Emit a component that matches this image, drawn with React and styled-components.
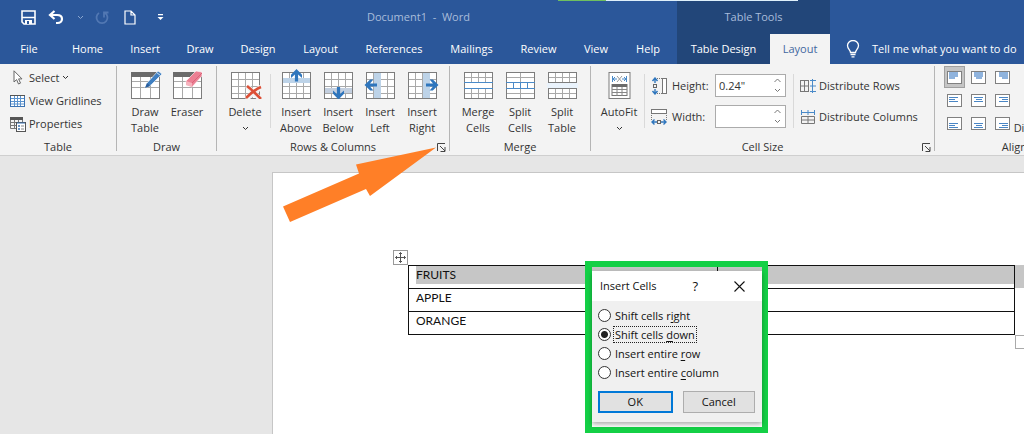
import { useState } from "react";
import styled, { createGlobalStyle, css } from "styled-components";

const TABS = [
  "File",
  "Home",
  "Insert",
  "Draw",
  "Design",
  "Layout",
  "References",
  "Mailings",
  "Review",
  "View",
  "Help",
];

const FRUITS = ["FRUITS", "APPLE", "ORANGE"];

const SHIFT_OPTIONS = [
  { id: "right", before: "Shift cells r", key: "i", after: "ght" },
  { id: "down", before: "Shift cells ", key: "d", after: "own" },
  { id: "row", before: "Insert entire ", key: "r", after: "ow" },
  { id: "column", before: "Insert entire ", key: "c", after: "olumn" },
];

const ALIGNMENTS = ["top", "middle", "bottom"].flatMap((v) =>
  ["left", "center", "right"].map((h) => ({ v, h }))
);

/* ---------- icons ---------- */

const Grid = ({ rows = [7, 14, 21], cols = [7.5, 14.5, 21.5], head }) => (
  <>
    <rect x="0.5" y="0.5" width="28" height="26" fill="#fff" stroke="#7d7d7d" />
    {rows.map((y) => (
      <path key={y} d={`M1 ${y + 0.5}H28`} stroke="#a9a9a9" />
    ))}
    {cols.map((x) => (
      <path key={x} d={`M${x} 1V26`} stroke="#a9a9a9" />
    ))}
    {head && <rect width="29" height="5" fill="#6b6b6b" />}
  </>
);

const BigIcon = ({ children }) => (
  <svg width="33" height="30" viewBox="-2 -3 33 30" fill="none" aria-hidden="true">
    {children}
  </svg>
);

const DrawTableIcon = () => (
  <BigIcon>
    <Grid head rows={[9, 15]} cols={[9.5, 19.5]} />
    <path d="M14 16l2-5L27-1l4 3-11 11z" fill="#3f7fc1" stroke="#fff" strokeWidth="0.6" />
    <path d="M14 16l2-5 3.5 3z" fill="#2a5f9e" />
    <path d="M25.500 0.500l4 3" stroke="#d6e5f4" />
  </BigIcon>
);

const EraserIcon = () => (
  <BigIcon>
    <Grid head rows={[9, 15]} cols={[9.5, 19.5]} />
    <path d="M13 9L23-1l6 1v4L19 15l-6-2z" fill="#ec7f93" stroke="#fff" strokeWidth="0.6" />
    <path d="M13 9l6 2v4l-6-2z" fill="#f6b3be" />
    <path d="M19 11L29 1" stroke="#d9657b" />
  </BigIcon>
);

const DeleteIcon = () => (
  <BigIcon>
    <Grid />
    <path d="M16 14L30 28M30 15L15 27" stroke="#f3f3f3" strokeWidth="5" />
    <path d="M16 14c4 3 9 8 14 13M30 15c-5 2-11 7-15 11" stroke="#dc4f36" strokeWidth="2.600" />
  </BigIcon>
);

const Arrow = ({ x, y, turn }) => (
  <g transform={`translate(${x} ${y}) rotate(${turn})`}>
    <path d="M0-6.500L5.500-.8V2.400L1.600-1V6h-3.200V-1L-5.500 2.400V-.8z" fill="#2f76bd" />
  </g>
);

const InsertAboveIcon = () => (
  <BigIcon>
    <Grid />
    <rect x="1" y="6" width="27" height="5" fill="#bdd3e8" />
    <Arrow x={14.500} y={3.500} turn={0} />
  </BigIcon>
);

const InsertBelowIcon = () => (
  <BigIcon>
    <Grid />
    <rect x="1" y="16" width="27" height="5" fill="#c3cfdf" />
    <Arrow x={14.500} y={21} turn={180} />
  </BigIcon>
);

const InsertLeftIcon = () => (
  <BigIcon>
    <Grid />
    <rect x="8" y="1" width="7" height="25" fill="#bdd3e8" />
    <Arrow x={5} y={13} turn={-90} />
  </BigIcon>
);

const InsertRightIcon = () => (
  <BigIcon>
    <Grid />
    <rect x="15" y="1" width="7" height="25" fill="#bdd3e8" />
    <Arrow x={24} y={13} turn={90} />
  </BigIcon>
);

const MergeIcon = () => (
  <BigIcon>
    <Grid rows={[5, 21]} />
    <rect x="1" y="11" width="27" height="5" fill="#fff" />
    <path d="M0 10.500H29M0 16.500H29" stroke="#4a8ac8" />
  </BigIcon>
);

const SplitCellsIcon = () => (
  <BigIcon>
    <Grid rows={[5, 21]} cols={[14.5]} />
    <path d="M0 10.500H29M0 16.500H29M7.500 11V16M14.500 11V16M21.500 11V16" stroke="#4a8ac8" />
  </BigIcon>
);

const SplitTableIcon = () => (
  <BigIcon>
    <Grid rows={[5, 21]} />
    <rect x="-1" y="11" width="31" height="5" fill="#eaf3fc" />
    <path d="M0 10.500H29M0 16.500H29" stroke="#7d7d7d" />
  </BigIcon>
);

const AutoFitIcon = () => (
  <BigIcon>
    <rect x="4" y="0.500" width="21" height="26" fill="#fff" stroke="#7d7d7d" />
    <path d="M7.500 4v6M21.500 4v6M8 7h4M17 7h4M10 5L8 7l2 2M19 5l2 2-2 2" stroke="#4a8ac8" />
    <path d="M12 4l5 6M17 4l-5 6" stroke="#999" />
    <rect x="7" y="12.500" width="15" height="11" fill="#fff" stroke="#777" />
    <rect x="7" y="12" width="15" height="3" fill="#6b6b6b" />
    <path d="M7 17.500H22M7 20.500H22M12 15V24M17 15V24" stroke="#888" />
  </BigIcon>
);

const TextDirectionIcon = () => (
  <BigIcon>
    <path d="M2 12h4M2 15h5M2 22h5M2 25h4" stroke="#8a8a8a" />
    <path d="M14 6v18M11 20l3 4 3-4" stroke="#4a8ac8" />
  </BigIcon>
);

const SelectIcon = () => (
  <svg width="17" height="16" viewBox="0 0 17 16" aria-hidden="true">
    <path d="M5 .8V12l2.600-2.400L9.500 14l2-.9-1.900-4.200H13z" fill="#fff" stroke="#666" />
  </svg>
);

const GridlinesIcon = () => (
  <svg width="17" height="16" viewBox="0 0 17 16" fill="none" aria-hidden="true">
    <rect x="1.500" y="2.500" width="14" height="11" fill="#fff" stroke="#3b73b3" />
    <path d="M2 5.500H15M2 8.500H15M2 11H15M5.500 3V13M8.500 3V13M11.500 3V13" stroke="#5b93cf" />
    <path d="M1 2.500H16" stroke="#555" />
  </svg>
);

const PropertiesIcon = () => (
  <svg width="17" height="16" viewBox="0 0 17 16" fill="none" aria-hidden="true">
    <path d="M1.500 1V12.500H8M1.500 6.500H8M1.500 9.500H8M5.500 3V12M9.500 3V6M13.500 3V6" stroke="#777" />
    <path d="M1 1H14V4H1z" fill="#555" />
    <rect x="7.500" y="6.500" width="9" height="9" fill="#fff" stroke="#555" />
    <path d="M8 7H16" stroke="#3b73b3" />
    <path d="M9 10h2M9 13h2" stroke="#3b73b3" strokeWidth="1.500" />
    <path d="M12 10h3M12 13h3" stroke="#888" />
  </svg>
);

const HeightIcon = () => (
  <svg width="17" height="18" viewBox="0 0 17 18" fill="none" aria-hidden="true">
    <path d="M4 2v4M4 12v4M1.500 4L4 1l2.500 3M1.500 14L4 17l2.500-3" stroke="#2f76bd" strokeWidth="1.400" />
    <rect x="2.500" y="7.500" width="3" height="3" stroke="#666" />
    <path d="M6 1.500h5M6 16.500h5" stroke="#777" strokeDasharray="1 1" />
    <rect x="11.500" y="1.500" width="4" height="15" fill="#fff" stroke="#777" />
  </svg>
);

const WidthIcon = () => (
  <svg width="17" height="18" viewBox="0 0 17 18" fill="none" aria-hidden="true">
    <rect x="0.500" y="1.500" width="15" height="4" fill="#fff" stroke="#777" />
    <path d="M.5 7v5M15.500 7v5" stroke="#777" strokeDasharray="1 1" />
    <path d="M1 14h5M10 14h5M3.500 11.500L1 14l2.500 2.500M12.500 11.500L15 14l-2.500 2.500" stroke="#2f76bd" strokeWidth="1.400" />
    <rect x="6.500" y="12.500" width="3" height="3" stroke="#666" />
  </svg>
);

const DistributeRowsIcon = () => (
  <svg width="16" height="16" viewBox="0 0 16 16" fill="none" aria-hidden="true">
    <path d="M.5 2V14M4.500 2V14M8.500 2V14M0 2.500H9M0 8H9M0 13.500H9" stroke="#777" />
    <path d="M12.500 1V15M10 2.500h6M10 8h6M10 13.500h6" stroke="#4a8ac8" />
  </svg>
);

const DistributeColumnsIcon = () => (
  <svg width="16" height="16" viewBox="0 0 16 16" fill="none" aria-hidden="true">
    <path d="M1 3.500H15M1.500 1v5M8 1v5M14.500 1v5" stroke="#4a8ac8" />
    <path d="M1.500 7.500h13v7h-13zM1 11H15M8 8V14" stroke="#777" />
  </svg>
);

const AlignIcon = ({ v, h }) => {
  const long = { left: 2, center: 3, right: 4 }[h];
  const short = { left: 2, center: 5, right: 7 }[h];
  const start = { middle: 3.5, bottom: 6.5 }[v];
  return (
    <svg width="15" height="13" viewBox="0 0 15 13" fill="none" aria-hidden="true">
      <rect x="0.500" y="0.500" width="14" height="12" fill="#fff" stroke="#808080" />
      {v === "top" ? (
        <path d={`M${long} 1h9v5H${short + 6}v2H${short}V6H${long}z`} fill="#8fb3dd" />
      ) : (
        <path
          d={`M${long} ${start}h9M${short} ${start + 2}h6M${long} ${start + 4}h9`}
          stroke="#4a86c5"
        />
      )}
    </svg>
  );
};

const Chevron = ({ up }) => (
  <svg width="7" height="5" viewBox="0 0 7 5" fill="none" aria-hidden="true">
    <path d={up ? "M.5 4l3-3 3 3" : "M1 1l2.500 2.500L6 1"} stroke="currentColor" />
  </svg>
);

const LauncherIcon = () => (
  <svg width="9" height="9" viewBox="0 0 9 9" fill="none" aria-hidden="true">
    <path d="M.5 8V.5H8M3 3l5 5M8 4v4.500H3.500" stroke="#444" />
  </svg>
);

/* ---------- parts ---------- */

const LargeButton = ({ icon, lines, menu }) => (
  <Large>
    {icon}
    {lines.map((line) => (
      <span key={line}>{line}</span>
    ))}
    {menu && (
      <Caret>
        <Chevron />
      </Caret>
    )}
  </Large>
);

const Group = ({ title, launcher, children, width }) => (
  <RibbonGroup $width={width}>
    <GroupBody>{children}</GroupBody>
    <GroupFooter>
      <span>{title}</span>
      {launcher && (
        <Launcher aria-label={`${title} settings`}>
          <LauncherIcon />
        </Launcher>
      )}
    </GroupFooter>
  </RibbonGroup>
);

const SizeField = ({ id, label, icon, value }) => (
  <SizeRow>
    {icon}
    <label htmlFor={id}>{label}</label>
    <Spinner>
      <input id={id} type="text" defaultValue={value} />
      <div>
        <button aria-label={`Increase ${id}`}>
          <Chevron up />
        </button>
        <button aria-label={`Decrease ${id}`}>
          <Chevron />
        </button>
      </div>
    </Spinner>
  </SizeRow>
);

const QuickAccess = () => (
  <QuickBar>
    <QuickButton aria-label="Save">
      <svg width="15" height="15" viewBox="0 0 15 15" fill="none">
        <path d="M1 1h13v13H3l-2-2z" stroke="#fff" strokeWidth="1.600" />
        <path d="M1 7.500h13" stroke="#fff" strokeWidth="1.500" />
        <path d="M4 10h7v4H4z" fill="#fff" />
        <path d="M6 11h2v3H6z" fill="#2b579a" />
      </svg>
    </QuickButton>
    <QuickButton aria-label="Undo">
      <svg width="16" height="15" viewBox="0 0 16 15" fill="none">
        <path d="M2 5h7c3 0 5 1.600 5 4s-2 4-4.500 4H8" stroke="#fff" strokeWidth="2.200" />
        <path d="M6.500 1L2 5l4.500 4" stroke="#fff" strokeWidth="2.200" />
      </svg>
    </QuickButton>
    <QuickButton aria-label="Undo list" $faded>
      <Chevron />
    </QuickButton>
    <QuickButton aria-label="Repeat">
      <svg width="14" height="15" viewBox="0 0 14 15" fill="none">
        <path d="M4 3a5.500 5.500 0 1 0 6 0M9 7.500V2.500h4.500" stroke="#5278b3" strokeWidth="1.800" />
      </svg>
    </QuickButton>
    <QuickButton aria-label="New document">
      <svg width="12" height="15" viewBox="0 0 12 15" fill="none">
        <path d="M1 1h6l4 4v9H1zM7 1v4h4" stroke="#fff" strokeWidth="1.200" />
      </svg>
    </QuickButton>
    <QuickButton aria-label="Customize toolbar">
      <svg width="7" height="7" viewBox="0 0 7 7">
        <path d="M1 0h5v1.300H1zM.5 3h6l-3 3z" fill="#fff" />
      </svg>
    </QuickButton>
  </QuickBar>
);

const InsertCells = () => {
  const [choice, setChoice] = useState("down");

  return (
    <Highlight>
      <Dialog role="dialog" aria-label="Insert Cells">
        <DialogTitle>
          <span>Insert Cells</span>
          <button aria-label="Help">?</button>
          <button aria-label="Close">
            <svg width="11" height="11" viewBox="0 0 11 11">
              <path d="M.5.5l10 10M10.500.5l-10 10" stroke="#111" strokeWidth="1.100" />
            </svg>
          </button>
        </DialogTitle>
        <Options>
          {SHIFT_OPTIONS.map((option) => (
            <Option key={option.id} $focused={choice === option.id}>
              <input
                type="radio"
                name="shift"
                checked={choice === option.id}
                onChange={() => setChoice(option.id)}
              />
              <span>
                {option.before}
                <u>{option.key}</u>
                {option.after}
              </span>
            </Option>
          ))}
        </Options>
        <DialogButtons>
          <DialogButton $primary>OK</DialogButton>
          <DialogButton>Cancel</DialogButton>
        </DialogButtons>
      </Dialog>
    </Highlight>
  );
};

const App = () => {
  return (
    <>
      <GlobalStyle />
      <Window>
        <Header>
          <Progress />
          <MainHead>
            <TitleRow>
              <QuickAccess />
              <DocTitle>Document1&nbsp; -&nbsp; Word</DocTitle>
            </TitleRow>
            <TabRow>
              {TABS.map((tab) => (
                <Tab key={tab}>{tab}</Tab>
              ))}
            </TabRow>
          </MainHead>
          <ContextHead>
            <ContextTitle>Table Tools</ContextTitle>
            <ContextTabs>
              <Tab>Table Design</Tab>
              <Tab $active>Layout</Tab>
            </ContextTabs>
          </ContextHead>
          <TellMe>
            <svg width="14" height="18" viewBox="0 0 14 18" fill="none" aria-hidden="true">
              <path
                d="M4.500 12.500c0-2.500-3-3.500-3-7a5.500 5 0 0 1 11 0c0 3.500-3 4.500-3 7zM4.500 14.500h5M5.500 16.800h3"
                stroke="#fff"
                strokeWidth="1.300"
              />
            </svg>
            Tell me what you want to do
          </TellMe>
        </Header>

        <Ribbon>
          <Group title="Table" width={117}>
            <Stack>
              <SmallButton>
                <SelectIcon /> Select <Chevron />
              </SmallButton>
              <SmallButton>
                <GridlinesIcon /> View Gridlines
              </SmallButton>
              <SmallButton>
                <PropertiesIcon /> Properties
              </SmallButton>
            </Stack>
          </Group>
          <Group title="Draw" width={100}>
            <LargeButton icon={<DrawTableIcon />} lines={["Draw", "Table"]} />
            <LargeButton icon={<EraserIcon />} lines={["Eraser"]} />
          </Group>
          <Group title="Rows & Columns" width={233} launcher>
            <LargeButton icon={<DeleteIcon />} lines={["Delete"]} menu />
            <Separator />
            <LargeButton icon={<InsertAboveIcon />} lines={["Insert", "Above"]} />
            <LargeButton icon={<InsertBelowIcon />} lines={["Insert", "Below"]} />
            <LargeButton icon={<InsertLeftIcon />} lines={["Insert", "Left"]} />
            <LargeButton icon={<InsertRightIcon />} lines={["Insert", "Right"]} />
          </Group>
          <Group title="Merge" width={141}>
            <LargeButton icon={<MergeIcon />} lines={["Merge", "Cells"]} />
            <LargeButton icon={<SplitCellsIcon />} lines={["Split", "Cells"]} />
            <LargeButton icon={<SplitTableIcon />} lines={["Split", "Table"]} />
          </Group>
          <Group title="Cell Size" width={344} launcher>
            <LargeButton icon={<AutoFitIcon />} lines={["AutoFit"]} menu />
            <Separator />
            <SizeStack>
              <SizeField id="height" label="Height:" icon={<HeightIcon />} value={'0.24"'} />
              <SizeField id="width" label="Width:" icon={<WidthIcon />} value="" />
            </SizeStack>
            <Separator />
            <SizeStack>
              <SmallButton $tall>
                <DistributeRowsIcon /> Distribute Rows
              </SmallButton>
              <SmallButton $tall>
                <DistributeColumnsIcon /> Distribute Columns
              </SmallButton>
            </SizeStack>
          </Group>
          <Group title="Alignment" width={187}>
            <AlignGrid>
              {ALIGNMENTS.map(({ v, h }) => (
                <AlignButton
                  key={v + h}
                  aria-label={`Align ${v} ${h}`}
                  $active={v === "top" && h === "left"}
                >
                  <AlignIcon v={v} h={h} />
                </AlignButton>
              ))}
            </AlignGrid>
            <LargeButton icon={<TextDirectionIcon />} lines={["Text", "Direction"]} />
          </Group>
        </Ribbon>

        <Workspace>
          <Page>
            <MoveHandle aria-label="Move table">
              <svg width="11" height="11" viewBox="0 0 11 11" fill="none">
                <path
                  d="M5.500.5v10M.5 5.500h10M4 2L5.500.5 7 2M4 9l1.500 1.500L7 9M2 4L.5 5.500 2 7M9 4l1.500 1.500L9 7"
                  stroke="#555"
                />
              </svg>
            </MoveHandle>
            <DocTable>
              <tbody>
                {FRUITS.map((name, index) => (
                  <tr key={name}>
                    <Cell $selected={index === 0}>
                      <div>{name}</div>
                    </Cell>
                    <Cell $selected={index === 0} $last>
                      <div />
                    </Cell>
                  </tr>
                ))}
              </tbody>
            </DocTable>
            <RowEnd />
            <ResizeHandle />
          </Page>
          <InsertCells />
        </Workspace>

        <Pointer viewBox="0 0 154 76" aria-hidden="true">
          <path d="M153 .5L73 17.500l3 9L0 59.500 7 75l76-33 4 7z" fill="#ff7f27" />
        </Pointer>
      </Window>
    </>
  );
};

/* ---------- styles ---------- */

const GlobalStyle = createGlobalStyle`
  * {
    box-sizing: border-box;
  }

  body {
    margin: 0;
    overflow: hidden;
    background: #e6e6e6;
    color: #333;
    font: 11px/16px "Open Sans", "Noto Sans", sans-serif;
  }

  button,
  input {
    margin: 0;
    padding: 0;
    border: 0;
    background: none;
    color: inherit;
    font: inherit;
  }

  svg {
    display: block;
    flex: none;
  }
`;

const Window = styled.div`
  position: relative;
  display: flex;
  flex-direction: column;
  min-height: 100vh;
  overflow: hidden;
`;

const Header = styled.header`
  position: relative;
  display: flex;
  background: #2b579a;
  color: #fff;
`;

const Progress = styled.div`
  position: absolute;
  top: 0;
  left: 558px;
  width: 240px;
  height: 1px;
  background: linear-gradient(to right, #6fbf5f 48px, #dff0fb 48px);
`;

const MainHead = styled.div`
  width: 677px;
  flex: none;
`;

const TitleRow = styled.div`
  display: flex;
  align-items: center;
  height: 34px;
`;

const QuickBar = styled.div`
  display: grid;
  grid-template-columns: 28px 28px 20px 24px 32px 28px;
  justify-items: center;
  width: 367px;
  padding-left: 14px;
`;

const QuickButton = styled.button`
  display: flex;
  align-items: center;
  color: ${(props) => (props.$faded ? "#8ba6cf" : "#fff")};
`;

const DocTitle = styled.span`
  color: #a9bddb;
`;

const TabRow = styled.nav`
  display: grid;
  grid-template-columns: 58px 59px 56px 54px 62px 63px 84px 71px 63px 52px 52px;
`;

const Tab = styled.button`
  height: 30px;
  font-weight: 500;

  ${(props) =>
    props.$active &&
    css`
      background: #f3f3f3;
      color: #4267a0;
    `}
`;

const ContextHead = styled.div`
  width: 153px;
  flex: none;
  background: #224679;
`;

const ContextTitle = styled.div`
  height: 34px;
  line-height: 33px;
  text-align: center;
  color: #a9bddb;
`;

const ContextTabs = styled.div`
  display: grid;
  grid-template-columns: 1fr 60px;
`;

const TellMe = styled.button`
  display: flex;
  align-items: center;
  align-self: flex-end;
  gap: 12px;
  height: 30px;
  padding-left: 16px;
  font-weight: 500;
  white-space: nowrap;
`;

const Ribbon = styled.div`
  display: flex;
  height: 92px;
  border-bottom: 1px solid #cfcfcf;
  background: #f3f3f3;
`;

const RibbonGroup = styled.section`
  display: flex;
  flex: none;
  flex-direction: column;
  width: ${(props) => props.$width}px;
  margin: 2px 0 4px;
  border-right: 1px solid #b5b5b5;
`;

const GroupBody = styled.div`
  display: flex;
  flex: none;
  height: 73px;
  padding-left: 7px;
`;

const GroupFooter = styled.div`
  display: flex;
  flex: none;
  align-items: center;
  justify-content: center;
  height: 16px;

  & > span {
    flex: 1;
    text-align: center;
  }
`;

const Launcher = styled.button`
  width: 12px;
  margin-left: -12px;
`;

const Stack = styled.div`
  display: flex;
  flex-direction: column;
  padding-left: 2px;
`;

const SmallButton = styled.button`
  display: flex;
  align-items: center;
  gap: 3px;
  height: ${(props) => (props.$tall ? 31 : 23)}px;
  white-space: nowrap;
`;

const Large = styled.button`
  display: flex;
  flex: none;
  flex-direction: column;
  align-items: center;
  justify-content: flex-start;
  width: 42px;
  padding-top: 3px;
  white-space: nowrap;

  & svg + span {
    margin-top: 5px;
  }
`;

const Caret = styled.div`
  padding-top: 6px;
`;

const Separator = styled.div`
  width: 1px;
  height: 54px;
  margin: 8px 4px 0;
  background: #d9d9d9;
`;

const SizeStack = styled.div`
  display: flex;
  flex-direction: column;
  padding: 4px 3px 0 2px;
`;

const SizeRow = styled.div`
  display: flex;
  align-items: center;
  gap: 4px;
  height: 31px;

  & label {
    width: 39px;
  }
`;

const Spinner = styled.div`
  display: flex;
  width: 71px;
  height: 23px;
  border: 1px solid #ababab;
  background: #fff;

  & input {
    flex: 1;
    min-width: 0;
    padding-left: 3px;
    outline: none;
  }

  & > div {
    display: flex;
    flex-direction: column;
    width: 16px;
    color: #777;
  }

  & button {
    display: flex;
    flex: 1;
    align-items: center;
    justify-content: center;
  }
`;

const AlignGrid = styled.div`
  display: grid;
  grid-template-columns: repeat(3, 24px);
  grid-auto-rows: 23px;
  justify-items: center;
  margin-right: 2px;
`;

const AlignButton = styled.button`
  display: flex;
  align-items: center;
  justify-content: center;
  width: 21px;
  height: 22px;

  ${(props) =>
    props.$active &&
    css`
      border: 1px solid #a0a0a0;
      background: #c5c5c5;
    `}
`;

const Workspace = styled.main`
  position: relative;
  display: flex;
  flex: 1;
  padding: 16px 0 0 272px;
`;

const Page = styled.div`
  display: grid;
  flex: 1;
  grid-template-columns: 15px 1fr 9px;
  grid-template-rows: 15px auto 14px;
  align-content: start;
  padding: 77px 0 0 120px;
  border-top: 1px solid #c6c6c6;
  border-left: 1px solid #c6c6c6;
  background: #fff;
`;

const MoveHandle = styled.button`
  display: flex;
  align-items: center;
  justify-content: center;
  width: 15px;
  height: 15px;
  border: 1px solid #999;
`;

const DocTable = styled.table`
  grid-area: 2 / 2;
  width: 100%;
  border-collapse: collapse;
  color: #111;
  font: 12px/18px Lato, "Open Sans", sans-serif;
`;

const Cell = styled.td`
  height: 23px;
  padding: 0 0 4px ${(props) => (props.$last ? 0 : 7)}px;
  border: 1px solid #111;
  width: ${(props) => (props.$last ? "49%" : "51%")};

  & div {
    height: 18px;
    background: ${(props) => (props.$selected ? "#c6c6c6" : "none")};
  }
`;

const RowEnd = styled.div`
  grid-area: 2 / 3;
  height: 23px;
  background: #c6c6c6;
`;

const ResizeHandle = styled.div`
  grid-area: 3 / 3;
  border: 1px solid #aaa;
  border-right: 0;
`;

/* floats over the document */
const Highlight = styled.div`
  position: absolute;
  top: 105px;
  left: 585px;
  width: 183px;
  padding: 4px 0 5px;
  border: 6px solid #14d046;
  border-left-width: 7px;
`;

const Dialog = styled.div`
  background: #f0f0f0;
  color: #111;
  box-shadow: 0 2px 5px rgba(0, 0, 0, 0.35);
`;

const DialogTitle = styled.div`
  display: flex;
  align-items: center;
  height: 30px;
  padding: 0 17px 0 8px;
  background: #fff;

  & span {
    flex: 1;
  }

  & button + button {
    margin-left: 36px;
  }

  & button {
    font-size: 13px;
  }
`;

const Options = styled.div`
  display: flex;
  flex-direction: column;
  align-items: flex-start;
  padding: 5px 6px 0;
`;

const Option = styled.label`
  display: flex;
  align-items: center;
  height: 19px;

  & input {
    appearance: none;
    width: 13px;
    height: 13px;
    border: 1px solid #333;
    border-radius: 50%;
    background: #fff;
  }

  & input:checked {
    background: radial-gradient(circle, #222 3px, #fff 4px);
  }

  & span {
    margin-left: 2px;
    padding: 0 1px;
    line-height: 15px;
    border: 1px dotted ${(props) => (props.$focused ? "#222" : "transparent")};
  }

  & u {
    text-underline-offset: 2px;
  }
`;

const DialogButtons = styled.div`
  display: flex;
  gap: 10px;
  padding: 9px 7px 9px 6px;
`;

const DialogButton = styled.button`
  flex: 1;
  height: 22px;
  border: ${(props) => (props.$primary ? "2px solid #0078d7" : "1px solid #adadad")};
  background: #e1e1e1;
`;

const Pointer = styled.svg`
  position: absolute;
  top: 147px;
  left: 283px;
  width: 154px;
  height: 76px;
  pointer-events: none;
`;

export default App;
